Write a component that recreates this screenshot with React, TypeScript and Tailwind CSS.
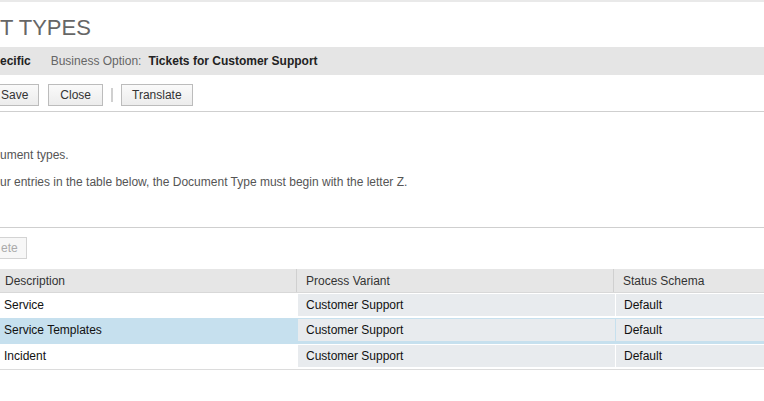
import React from "react";

type Row = { description: string; variant: string; schema: string; selected?: boolean };

const rows: Row[] = [
  { description: "Service", variant: "Customer Support", schema: "Default" },
  { description: "Service Templates", variant: "Customer Support", schema: "Default", selected: true },
  { description: "Incident", variant: "Customer Support", schema: "Default" },
];

function Button({ children, className = "" }: { children: React.ReactNode; className?: string }) {
  return (
    <button
      className={`h-[22px] border border-[#bcbcbc] bg-gradient-to-b from-[#fafafa] to-[#ececec] text-[12px] text-[#333] leading-none ${className}`}
    >
      {children}
    </button>
  );
}

export default function App() {
  return (
    <div className="w-[764px] h-[401px] bg-white overflow-hidden font-['Liberation_Sans',Arial,sans-serif] text-[12px]">
      <div className="h-[2px] bg-[#e9e9e9]" />

      <div className="h-[45px] pt-[13px]">
        <h1 className="text-[22px] leading-[26px] text-[#666] whitespace-nowrap">T TYPES</h1>
      </div>

      <div className="h-[28px] bg-[#e5e5e5] flex items-center whitespace-nowrap">
        <span className="font-bold text-[#222]">ecific</span>
        <span className="ml-[20px] text-[#666]">Business Option:</span>
        <span className="ml-[7px] font-bold text-[#222]">Tickets for Customer Support</span>
      </div>

      <div className="h-[37px] border-b border-[#cfcfcf] flex items-start pt-[9px] gap-[8px]">
        <Button className="-ml-[10px] px-[10px] mr-[1px]">Save</Button>
        <Button className="px-[11px]">Close</Button>
        <div className="w-[2px] h-[14px] bg-[#d0d0d0] mt-[4px]" />
        <Button className="px-[10px]">Translate</Button>
      </div>

      <div className="h-[116px] border-b border-[#cfcfcf] text-[#555] pt-[36px]">
        <p className="leading-[14px] whitespace-nowrap">ument types.</p>
        <p className="leading-[14px] mt-[13px] whitespace-nowrap">
          ur entries in the table below, the Document Type must begin with the letter Z.
        </p>
      </div>

      <div className="pt-[9px] h-[41px]">
        <button className="h-[22px] -ml-[11px] pl-[11px] pr-[8px] border border-[#d3d3d3] bg-[#f7f7f7] text-[12px] text-[#aaa] leading-none">
          ete
        </button>
      </div>

      <div className="border-b border-[#dcdcdc]">
        <div className="flex h-[24px] bg-[#e6e6e6] text-[#333] border-b border-[#d8d8d8]">
          <div className="w-[297px] pl-[5px] flex items-center border-r border-[#d0d0d0]">Description</div>
          <div className="w-[317px] pl-[9px] flex items-center border-r border-[#d0d0d0]">Process Variant</div>
          <div className="flex-1 pl-[9px] flex items-center">Status Schema</div>
        </div>
        {rows.map((r) => (
          <div
            key={r.description}
            className={`flex pt-[1px] text-[#111] ${r.selected ? "h-[26px] pb-[3px] bg-[#c6e0ee]" : "h-[25px] pb-[2px] bg-white"}`}
          >
            <div className="w-[297px] pl-[4px] flex items-center">{r.description}</div>
            <div className="w-[317px] ml-[1px] pl-[8px] flex items-center bg-[#e8ebee]">{r.variant}</div>
            <div className="flex-1 ml-[1px] pl-[8px] flex items-center bg-[#e8ebee]">{r.schema}</div>
          </div>
        ))}
      </div>
    </div>
  );
}
